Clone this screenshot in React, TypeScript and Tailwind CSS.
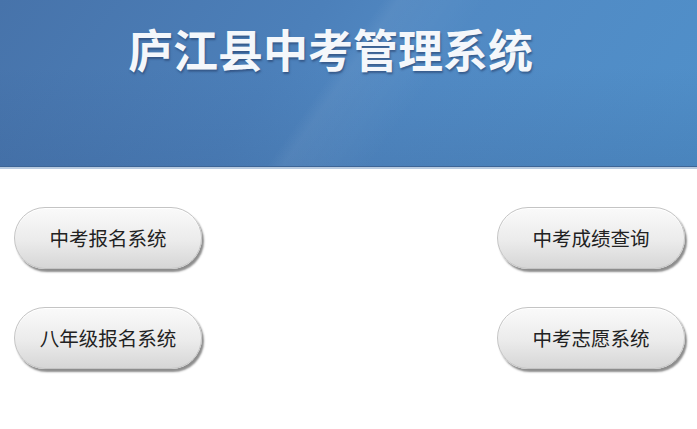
import React from "react";

const cjk = { fontFamily: '"Noto Sans CJK SC", "Noto Sans", sans-serif' };

function PillButton({ label }: { label: string }) {
  return (
    <button
      style={cjk}
      className="w-[188px] h-[62px] rounded-full border border-[#c4c4c4] bg-[linear-gradient(to_bottom,#fafafa_0%,#ebebeb_55%,#d6d6d6_100%)] shadow-[2px_3px_2px_rgba(0,0,0,0.45),inset_0_1px_0_#ffffff] text-[19.5px] font-normal text-[#222] flex items-center justify-center"
    >
      {label}
    </button>
  );
}

export default function App() {
  return (
    <div className="w-[697px] h-[429px] bg-white overflow-hidden">
      {/* banner */}
      <header className="relative h-[169px] border-b-[2px] border-[#b9cbe0] bg-[linear-gradient(125deg,#4773aa_0%,#4c80ba_40%,#5189c3_55%,#5090ca_100%)] overflow-hidden">
        <div className="absolute inset-0 bg-[linear-gradient(to_bottom,rgba(255,255,255,0)_40%,rgba(40,70,120,0.16)_100%)]" />
        <div className="absolute inset-0 bg-[linear-gradient(125deg,transparent_47%,rgba(255,255,255,0.05)_49%,transparent_60%)]" />
        <div className="absolute left-0 right-0 bottom-0 h-px bg-[#3d6596]" />
        <h1
          style={{ fontFamily: '"Noto Sans CJK SC", serif' }}
          className="relative pl-[128px] pt-[21px] text-[45px] leading-[56px] font-bold text-[#f4f7fb] [text-shadow:1px_2px_2px_rgba(30,50,90,0.5)]"
        >
          庐江县中考管理系统
        </h1>
      </header>

      {/* entry buttons */}
      <main className="pl-[14px] pr-[12px] pt-[38px] grid grid-cols-2 gap-y-[38px]">
        <div className="flex justify-start">
          <PillButton label="中考报名系统" />
        </div>
        <div className="flex justify-end">
          <PillButton label="中考成绩查询" />
        </div>
        <div className="flex justify-start">
          <PillButton label="八年级报名系统" />
        </div>
        <div className="flex justify-end">
          <PillButton label="中考志愿系统" />
        </div>
      </main>
    </div>
  );
}
